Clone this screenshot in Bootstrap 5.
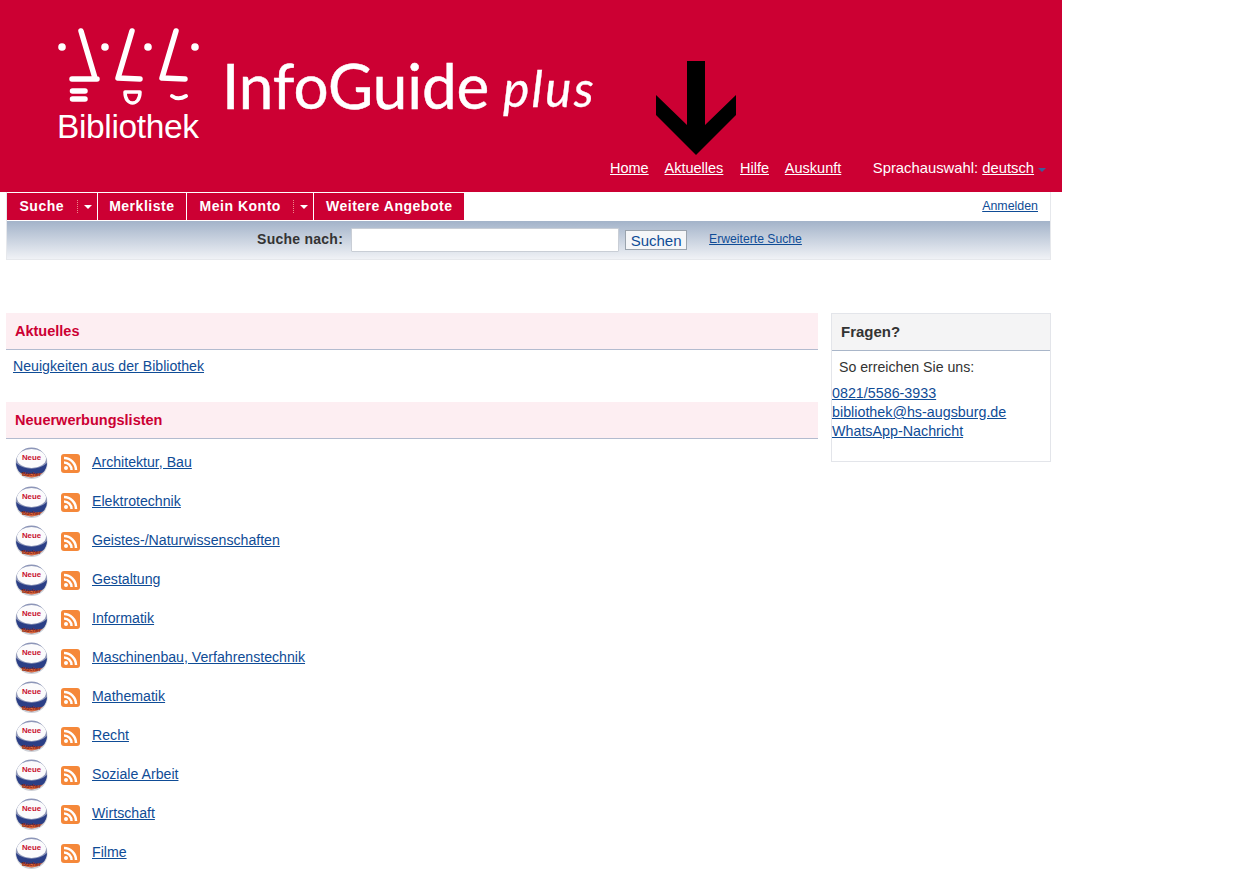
<!DOCTYPE html>
<html lang="de"><head><meta charset="utf-8"><title>InfoGuide plus</title>
<link href="https://cdn.jsdelivr.net/npm/bootstrap@5.3.0/dist/css/bootstrap.min.css" rel="stylesheet">
<style>
html,body{height:876px;overflow:hidden}
body{background:#fff;font-family:"Liberation Sans",Arial,sans-serif;font-size:14.15px;color:#333;line-height:19px}
a{color:#0f4c96}
.site-head{width:1062px;height:192px;background:#c03;position:relative;color:#fff}
.logo-box{position:absolute;left:0;top:0}
.logo-word{position:absolute;left:57px;top:107px;font-size:33.5px;line-height:40px;letter-spacing:-.35px;color:#fff}
.brand{position:absolute;left:222px;top:47px;font-family:Lato,sans-serif;font-size:62px;line-height:76px;color:#fff;white-space:nowrap;letter-spacing:-.1px;-webkit-text-stroke:.5px #fff}
.brand i{font-size:50px;letter-spacing:2.2px;margin-left:-2px;vertical-align:2px;-webkit-text-stroke:.3px #fff}
.down-arrow{position:absolute;left:656px;top:61px}
.top-links{position:absolute;left:610px;top:158px;font-size:14.5px;line-height:20px;white-space:nowrap}
.top-links a{color:#fff;margin-right:12.6px}
.lang{margin-left:19px;font-size:14.8px}
.lang-caret{display:inline-block;border:4px solid transparent;border-top-color:#3c5f9a;border-bottom:0;margin-left:4px;vertical-align:1px}
.shell{margin-left:6px;width:1045px;border:1px solid #e6e8ec;border-top:0;height:68px}
.tabs-row{height:29px;padding-top:1px}
.tab-item{background:#c03;color:#fff;font-weight:700;font-size:14px;letter-spacing:.52px;height:27px;line-height:27px;padding:0 11.5px;border-right:1px solid #fff;white-space:nowrap}
.tab-item.has-menu{display:flex;padding-right:0}
.tab-sep{border-left:1px dotted #e88;height:13px;margin:7px 6px 0 0}
.tab-caret{border:4.5px solid transparent;border-top-color:#fff;border-bottom:0;margin:12px 5px 0 0}
.tab-label{margin:0 12.5px 0 1px}
.login{font-size:12.4px;line-height:27px;margin-right:12px}
.search-band{height:38px;background:linear-gradient(#a3b3c9,#f0f2f6);padding:7px 0 0 2px}
.search-label{font-weight:700;font-size:14px;color:#333;letter-spacing:.25px;margin-right:8px;line-height:22px}
.search-input{width:268px;height:24px;border:1px solid #c9ced6;background:#fff;margin-right:6px;border-radius:1px}
.search-btn{width:62px;height:20px;margin-top:2px;padding:0;font-size:15px;line-height:19px;color:#0f4c96;background:#f5f6f8;border:1px solid #9aa3ad;border-radius:0}
.adv{font-size:12.2px;margin-left:22px;line-height:22px}
.main-wrap{margin:53px 0 0 6px;width:1045px}
.left-col{width:812px}
.right-col{width:220px}
.sec-head{height:37px;background:#fdeef2;border-bottom:1px solid #b3bbcf;padding:0 9px;line-height:36px;font-size:14.5px;font-weight:700;color:#c03}
.news-link{padding:7px 7px 0;height:52px}
.list-line{height:39px;display:flex;align-items:center}
.badge-ico{margin:2px 0 0 9px;width:33px;height:33px}
.rss-ico{margin-left:13px;width:19px;height:19px;margin-top:2px}
.list-line a{margin-left:12px}
.rows{padding-top:4px}
.side-box{border:1px solid #e3e5ea;height:149px}
.side-head{height:37px;background:#f4f4f5;border-bottom:1px solid #a9b6c9;padding:0 9px;font-weight:700;font-size:15px;line-height:36px;color:#333}
.side-intro{padding:7px 7px 0;line-height:19px}
.side-links{margin-top:7px;line-height:19px;font-size:14.3px}
</style></head><body>
<header class="site-head">
  <div class="logo-box">
  <svg width="215" height="110" viewBox="0 0 215 110" fill="none" stroke="#fff" stroke-width="5.500" stroke-linecap="round" stroke-linejoin="round">
    <g fill="#fff" stroke="none"><circle cx="62" cy="47" r="3.800"/><circle cx="105" cy="47" r="3.800"/><circle cx="148" cy="47" r="3.800"/><circle cx="195" cy="47" r="3.800"/></g>
    <path d="M81 31 95 78M72 79H97"/><path d="M132 31 118 78 140 79"/><path d="M176 31 162 78 185 79"/>
    <path d="M72.500 91H85M72.500 99H85"/>
    <path d="M125 92H140C140 100 136 103 132.500 103C129 103 125 100 125 92Z" stroke-width="3.500"/>
    <path d="M172 96C176 99 181 99 186 96" stroke-width="4"/>
  </svg>
  </div>
  <div class="logo-word">Bibliothek</div>
  <div class="brand">InfoGuide <i>plus</i></div>
  <svg class="down-arrow" width="80" height="95" viewBox="0 0 80 95"><path d="M31 0H49V64L80 34V54L40 94 0 54V34L31 64Z" fill="#000"/></svg>
  <nav class="top-links"><a href="#">Home</a> <a href="#">Aktuelles</a> <a href="#">Hilfe</a> <a href="#">Auskunft</a><span class="lang">Sprachauswahl: <a href="#" class="me-0">deutsch</a><span class="lang-caret"></span></span></nav>
</header>
<div class="shell">
  <div class="tabs-row d-flex justify-content-between">
    <div class="d-flex">
      <div class="tab-item has-menu"><span class="tab-label">Suche</span><span class="tab-sep"></span><span class="tab-caret"></span></div>
      <div class="tab-item">Merkliste</div>
      <div class="tab-item has-menu"><span class="tab-label">Mein Konto</span><span class="tab-sep"></span><span class="tab-caret"></span></div>
      <div class="tab-item border-0">Weitere Angebote</div>
    </div>
    <a href="#" class="login">Anmelden</a>
  </div>
  <div class="search-band d-flex justify-content-center">
    <span class="search-label">Suche nach:</span><input class="search-input" type="text" aria-label="Suche"><button class="search-btn" type="button">Suchen</button><a href="#" class="adv">Erweiterte Suche</a>
  </div>
</div>
<div class="main-wrap d-flex justify-content-between">
  <div class="left-col">
    <div class="sec-head">Aktuelles</div>
    <div class="news-link"><a href="#">Neuigkeiten aus der Bibliothek</a></div>
    <div class="sec-head">Neuerwerbungslisten</div>
    <div class="rows" id="rows"></div>
  </div>
  <aside class="right-col">
    <div class="side-box">
      <div class="side-head">Fragen?</div>
      <div class="side-intro">So erreichen Sie uns:</div>
      <div class="side-links"><a href="#">0821/5586-3933</a><br><a href="#">bibliothek@hs-augsburg.de</a><br><a href="#">WhatsApp-Nachricht</a></div>
    </div>
  </aside>
</div>
<script>
var names=["Architektur, Bau","Elektrotechnik","Geistes-/Naturwissenschaften","Gestaltung","Informatik","Maschinenbau, Verfahrenstechnik","Mathematik","Recht","Soziale Arbeit","Wirtschaft","Filme"];
var badge='<svg class="badge-ico" viewBox="0 0 33 33"><defs><clipPath id="cc"><ellipse cx="16.500" cy="15.500" rx="15.500" ry="15"/></clipPath></defs><ellipse cx="16.500" cy="16.500" rx="16" ry="15.500" fill="#cfd2d8"/><g clip-path="url(#cc)"><rect width="33" height="33" fill="#8d96b8"/><ellipse cx="16.500" cy="11.500" rx="14.500" ry="9.500" fill="#fbfbfc"/><path d="M0 15C8 24 25 24 33 15V24C25 28 8 28 0 24Z" fill="#2b3f86"/><path d="M0 24C8 28 25 28 33 24V33H0Z" fill="#d9683f"/></g><text x="16.500" y="12.500" font-size="7.800" font-weight="700" fill="#c8102e" text-anchor="middle" font-family="Liberation Sans">Neue</text><text x="16.500" y="28.500" font-size="5.500" font-weight="700" fill="#8a2414" text-anchor="middle" font-family="Liberation Sans">Bücher</text></svg>';
var rss='<svg class="rss-ico" viewBox="0 0 19 19"><rect width="19" height="19" rx="3" fill="#f5883a"/><circle cx="5" cy="14" r="2" fill="#fff"/><path d="M3 8.500A7.500 7.500 0 0 1 10.500 16M3 4A12 12 0 0 1 15 16" fill="none" stroke="#fff" stroke-width="2.500"/></svg>';
document.getElementById('rows').innerHTML=names.map(function(n){return '<div class="list-line">'+badge+rss+'<a href="#">'+n+'</a></div>'}).join('');
</script>
<script src="https://cdn.jsdelivr.net/npm/bootstrap@5.3.0/dist/js/bootstrap.bundle.min.js"></script>
</body></html>
